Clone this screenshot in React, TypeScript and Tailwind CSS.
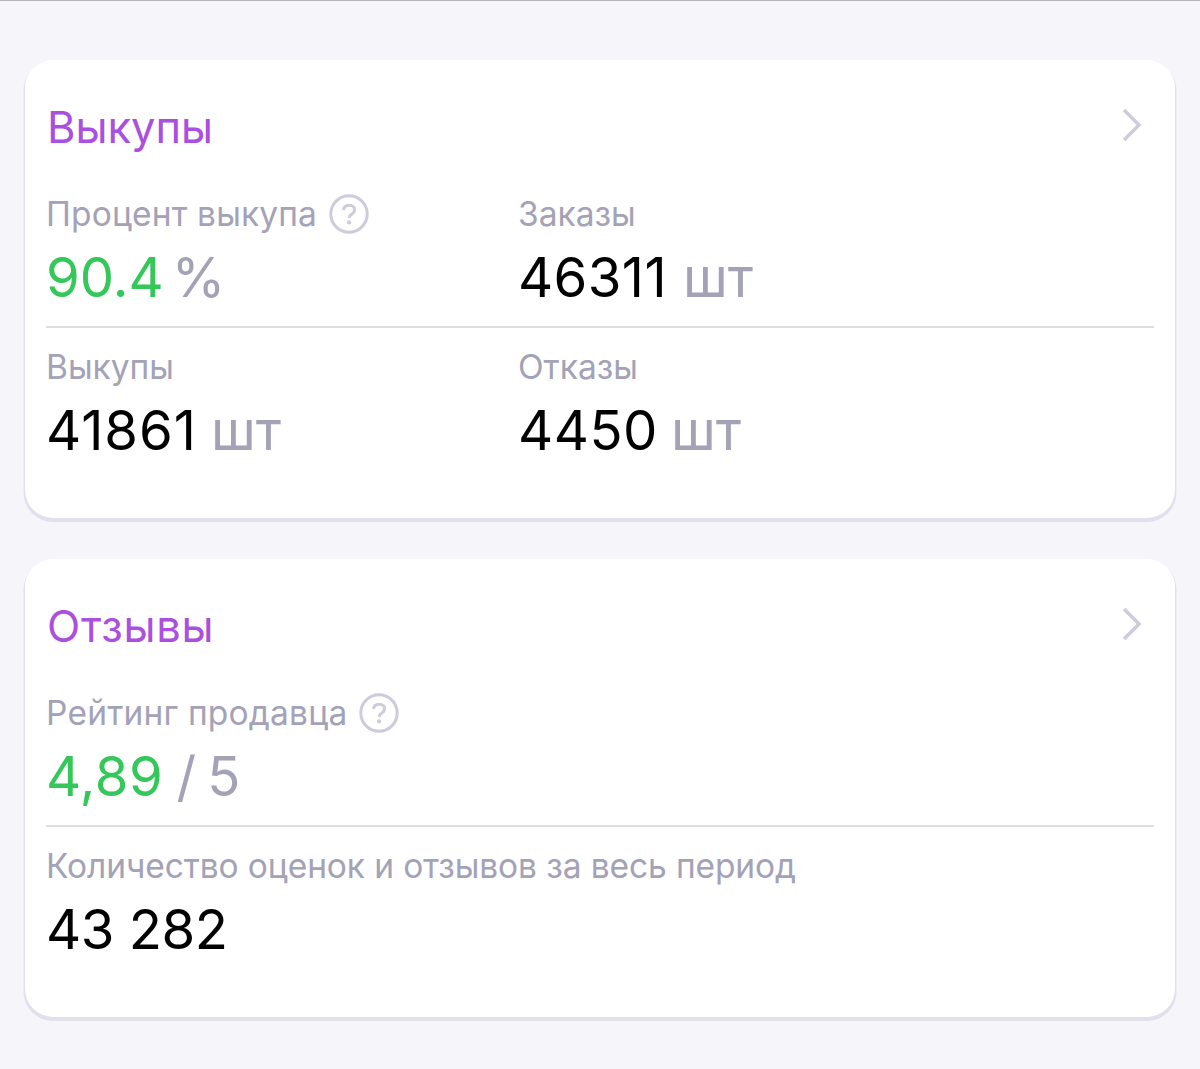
import React from "react";

const font = { fontFamily: '"Inter", "Noto Sans", sans-serif' };

function Help() {
  return (
    <svg width="40" height="40" viewBox="0 0 40 40" fill="none" className="shrink-0">
      <circle cx="20" cy="20" r="18.2" stroke="#cdccdb" strokeWidth="3" />
      <path d="M14.5 16c.3-3 2.6-4.8 5.6-4.8 3.2 0 5.5 1.9 5.5 4.6 0 2-1 3.1-2.7 4.2-1.8 1.1-2.6 2-2.6 3.9" stroke="#cdccdb" strokeWidth="3" fill="none" />
      <circle cx="20.1" cy="28.4" r="2.1" fill="#cdccdb" />
    </svg>
  );
}

function Chevron() {
  return (
    <svg width="20" height="34" viewBox="0 0 20 34" fill="none">
      <path d="M2 2l15 15L2 32" stroke="#cdccdb" strokeWidth="3.4" />
    </svg>
  );
}

type MetricProps = {
  label: string;
  help?: boolean;
  value: string;
  unit?: string;
  green?: boolean;
  unitGap: string;
  labelTrack?: string;
  valueTrack?: string;
  unitClass?: string;
};

function Metric({ label, help, value, unit, green, unitGap, labelTrack = "", valueTrack = "", unitClass = "" }: MetricProps) {
  return (
    <div className="flex flex-col">
      <div className="flex h-[40px] items-center gap-[12px]">
        <span className={`text-[33.5px] leading-[40px] text-[#a3a2b6] whitespace-nowrap ${labelTrack}`}>{label}</span>
        {help && <Help />}
      </div>
      <div className={`mt-[15px] flex h-[56px] items-center text-[54.5px] leading-[56px] whitespace-nowrap ${unitGap}`}>
        <span className={`${green ? "text-[#34c759]" : "text-black"} ${valueTrack}`}>{value}</span>
        {unit && <span className={`text-[#a3a2b6] ${unitClass}`}>{unit}</span>}
      </div>
    </div>
  );
}

function Card({ title, titleTrack = "", children }: { title: string; titleTrack?: string; children: React.ReactNode }) {
  return (
    <section className="mx-[25px] h-[458px] rounded-[28px] bg-white pt-[41px] shadow-[0_2.5px_0_1.5px_#e3e0ee]">
      <div className="flex h-[52px] items-center justify-between pl-[22px] pr-[33px]">
        <h2 className={`text-[43.5px] leading-[52px] font-normal text-[#ab4fe0] ${titleTrack}`}>{title}</h2>
        <div className="-mt-[4px]"><Chevron /></div>
      </div>
      {children}
    </section>
  );
}

export default function App() {
  return (
    <div style={font} className="h-[1069px] overflow-hidden bg-[#f6f5fa]">
      <div className="h-px bg-[#b3b3ba]" />
      <div className="flex flex-col gap-[41px] pt-[59px]">
        <Card title="Выкупы">
          <div className="mt-[41px] grid grid-cols-[472px_1fr] pl-[21px]">
            <Metric label="Процент выкупа" help value="90.4" unit="%" green unitGap="gap-[8px]" labelTrack="tracking-[0.15px]" />
            <Metric label="Заказы" value="46311" unit="шт" unitGap="gap-[16px]" valueTrack="tracking-[0.4px]" />
          </div>
          <div className="mx-[21px] mt-[21px] h-[2px] bg-[#dededf]" />
          <div className="mt-[19px] grid grid-cols-[472px_1fr] pl-[21px]">
            <Metric label="Выкупы" value="41861" unit="шт" unitGap="gap-[14px]" valueTrack="tracking-[1px]" />
            <Metric label="Отказы" value="4450" unit="шт" unitGap="gap-[13px]" valueTrack="tracking-[0.5px]" />
          </div>
        </Card>
        <Card title="Отзывы" titleTrack="tracking-[0.7px]">
          <div className="mt-[41px] pl-[21px]">
            <Metric label="Рейтинг продавца" help value="4,89" unit="/ 5" green unitGap="gap-[13px]" labelTrack="tracking-[0.2px]" valueTrack="tracking-[0.5px]" unitClass="[word-spacing:-4px]" />
          </div>
          <div className="mx-[21px] mt-[21px] h-[2px] bg-[#dededf]" />
          <div className="mt-[19px] pl-[21px]">
            <Metric label="Количество оценок и отзывов за весь период" value="43 282" unitGap="gap-[14px]" labelTrack="tracking-[-0.1px]" valueTrack="tracking-[-0.5px]" />
          </div>
        </Card>
      </div>
    </div>
  );
}
